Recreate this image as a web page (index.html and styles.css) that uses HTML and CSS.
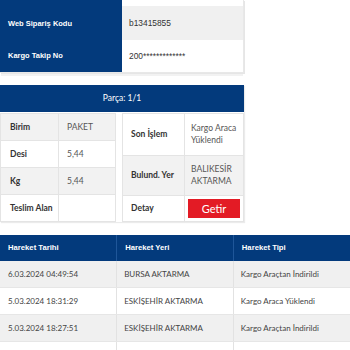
FILE: index.html
```html
<!DOCTYPE html>
<html lang="tr">
<head>
<meta charset="utf-8">
<title>Kargo Takip</title>
<link rel="stylesheet" href="styles.css">
</head>
<body>
<div class="page">
  <table class="info">
    <tr class="info-top"><th></th><td></td></tr>
    <tr class="alt"><th>Web Sipariş Kodu</th><td>b13415855</td></tr>
    <tr><th>Kargo Takip No</th><td>200*************</td></tr>
  </table>

  <section class="parcel">
    <div class="parcel-head">Parça: 1/1</div>
    <div class="parcel-body">
      <table class="specs">
        <tr class="alt"><th>Birim</th><td>PAKET</td></tr>
        <tr><th>Desi</th><td>5,44</td></tr>
        <tr class="alt"><th>Kg</th><td>5,44</td></tr>
        <tr><th>Teslim Alan</th><td></td></tr>
      </table>
      <table class="status">
        <tr class="r1"><th>Son İşlem</th><td>Kargo Araca Yüklendi</td></tr>
        <tr class="alt r2"><th>Bulund. Yer</th><td>BALIKESİR AKTARMA</td></tr>
        <tr class="r3"><th>Detay</th><td><button class="btn">Getir</button></td></tr>
      </table>
    </div>
  </section>

  <table class="moves">
    <thead>
      <tr><th>Hareket Tarihi</th><th>Hareket Yeri</th><th>Hareket Tipi</th></tr>
    </thead>
    <tbody>
      <tr class="alt"><td>6.03.2024 04:49:54</td><td>BURSA AKTARMA</td><td>Kargo Araçtan İndirildi</td></tr>
      <tr><td>5.03.2024 18:31:29</td><td>ESKİŞEHİR AKTARMA</td><td>Kargo Araca Yüklendi</td></tr>
      <tr class="alt"><td>5.03.2024 18:27:51</td><td>ESKİŞEHİR AKTARMA</td><td>Kargo Araçtan İndirildi</td></tr>
      <tr><td></td><td></td><td></td></tr>
    </tbody>
  </table>
</div>
</body>
</html>
```
FILE: styles.css
```css
* { box-sizing: border-box; }

html, body {
  margin: 0;
  padding: 0;
  background: #fff;
  overflow: hidden;
}

body {
  font-family: "Lato", "Liberation Sans", sans-serif;
  color: #444;
}

.page {
  width: 350px;
}

table {
  border-collapse: collapse;
  border-spacing: 0;
}

/* order summary */
.info {
  width: 244px;
  table-layout: fixed;
  box-shadow: 1px 1px 0 #e6e6e6, 0 4px 0 -1px #f2f2f2;
  border-right: 1px solid #e8e8e8;
  border-bottom: 1px solid #e8e8e8;
}

.info th {
  width: 122px;
  background: #033a7c;
  color: #fff;
  font-family: "Liberation Sans", Arial, sans-serif;
  font-weight: 700;
  font-size: 7.5px;
  text-align: left;
  padding: 0 0 0 8px;
}

.info td {
  font-family: "Liberation Sans", Arial, sans-serif;
  font-size: 8.4px;
  color: #333;
  padding: 0 0 0 7px;
}

.info tr { height: 34px; }
.info tr.info-top { height: 6px; }
.info tr:last-child { height: 32px; }
.info tr.alt td { background: #f0f0f0; }

/* parcel panel */
.parcel {
  width: 244px;
  margin-top: 12px;
  box-shadow: 1px 1px 1px rgba(0, 0, 0, 0.08);
}

.parcel-head {
  height: 27px;
  background: #033a7c;
  color: #fff;
  font-size: 8.5px;
  display: flex;
  align-items: center;
  justify-content: center;
}

.parcel-body {
  display: flex;
  gap: 6px;
  padding-top: 1px;
}

.specs, .status {
  table-layout: fixed;
  border: 1px solid #e4e4e4;
  font-size: 8.5px;
}

.specs th, .specs td,
.status th, .status td {
  border: 1px solid #e4e4e4;
  text-align: left;
  vertical-align: middle;
}

.specs th, .status th {
  font-weight: 700;
  color: #333;
}

.specs td, .status td {
  color: #555;
}

.specs {
  width: 116px;
}

.specs th { width: 58px; padding: 0 4px 0 9px; }
.specs td { padding: 0 4px 0 8px; }
.specs tr { height: 27px; }

.status {
  width: 122px;
}

.status th { width: 62px; padding: 0 4px 0 8px; }
.status td { padding: 0 4px 0 6px; line-height: 12px; }
.status tr.r1 { height: 42px; }
.status tr.r2 { height: 40px; }
.status tr.r3 { height: 26px; }

.specs tr.alt th, .specs tr.alt td,
.status tr.alt th, .status tr.alt td {
  background: #f2f2f2;
}

.btn {
  display: block;
  width: 52px;
  height: 19px;
  margin-left: -3px;
  border: 0;
  padding: 0;
  background: #e31b25;
  color: #fff;
  font-family: "Lato", sans-serif;
  font-size: 11px;
  line-height: 19px;
}

/* movement history */
.moves {
  width: 350px;
  table-layout: fixed;
  margin-top: 13px;
}

.moves th {
  height: 26px;
  background: #033a7c;
  color: #fff;
  font-family: "Liberation Sans", Arial, sans-serif;
  font-weight: 700;
  font-size: 7.7px;
  text-align: left;
  padding: 0 0 0 8px;
  border-right: 1px solid #1f5699;
}

.moves td {
  height: 27px;
  font-size: 8px;
  color: #444;
  padding: 0 0 0 7px;
  border-right: 1px solid #e2e2e2;
  border-bottom: 1px solid #e6e6e6;
}

.moves th:first-child, .moves td:first-child { padding-left: 8px; }
.moves th:last-child, .moves td:last-child { border-right: 0; }
.moves tr.alt td { background: #f0f0f0; }
```
